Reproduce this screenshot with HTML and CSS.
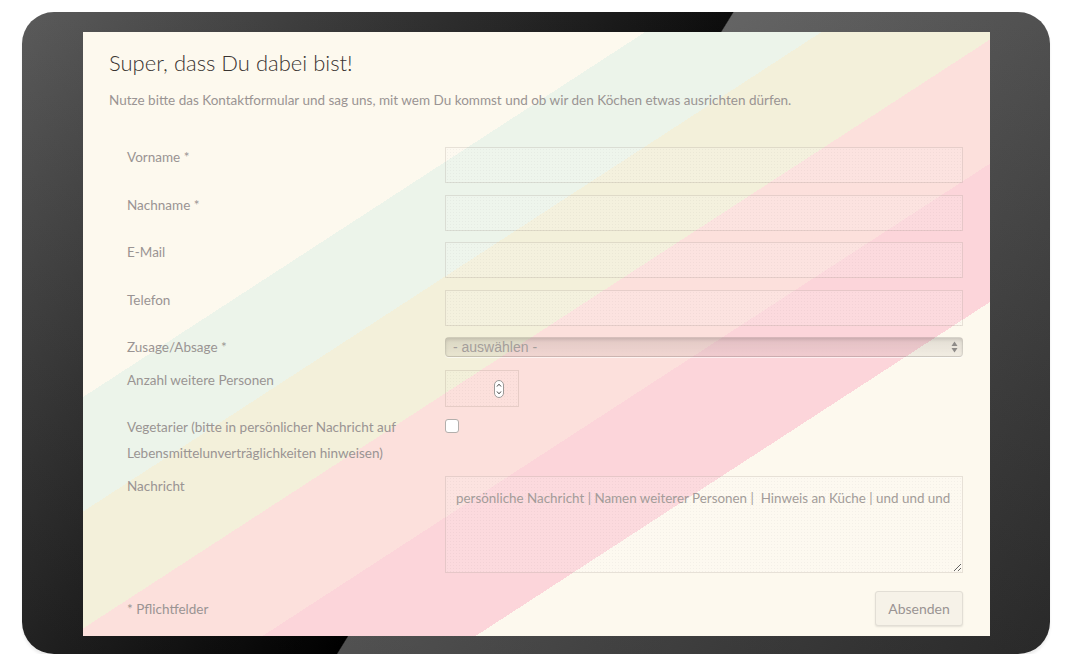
FILE: index.html
```html
<!DOCTYPE html>
<html>

<head>
  <title>Anmeldung</title>
  <link rel="stylesheet" href="styles.css">
</head>

<body>
  <div class="tablet">
    <div class="screen">
      <h1 class="title">Super, dass Du dabei bist!</h1>
      <p class="intro">Nutze bitte das Kontaktformular und sag uns, mit wem Du kommst und ob wir den Köchen etwas ausrichten dürfen.</p>

      <form class="contact-form">
        <div class="row">
          <label>Vorname *</label>
          <input class="field" type="text">
        </div>
        <div class="row">
          <label>Nachname *</label>
          <input class="field" type="text">
        </div>
        <div class="row">
          <label>E-Mail</label>
          <input class="field" type="text">
        </div>
        <div class="row">
          <label>Telefon</label>
          <input class="field" type="text">
        </div>
        <div class="row row-select">
          <label>Zusage/Absage *</label>
          <div class="select-box">
            <select class="select">
              <option>- auswählen -</option>
            </select>
            <svg class="select-arrows" width="7" height="12" viewBox="0 0 7 12">
              <path d="M3.5 0.5 L6.5 5 L0.5 5 Z" fill="#8e8b88" />
              <path d="M3.5 11.5 L6.5 7 L0.5 7 Z" fill="#8e8b88" />
            </svg>
          </div>
        </div>
        <div class="row row-number">
          <label>Anzahl weitere Personen</label>
          <div class="number-box">
            <svg class="spinner" width="10" height="18" viewBox="0 0 10 18">
              <rect x="0.5" y="0.5" width="9" height="17" rx="4.5" fill="#fff" stroke="#9c9a98" />
              <path d="M3 6.5 L5 4.2 L7 6.5" fill="none" stroke="#444" stroke-width="1" />
              <path d="M3 11.5 L5 13.8 L7 11.5" fill="none" stroke="#444" stroke-width="1" />
            </svg>
          </div>
        </div>
        <div class="row row-check">
          <label>Vegetarier (bitte in persönlicher Nachricht auf Lebensmittelunverträglichkeiten hinweisen)</label>
          <input class="check" type="checkbox">
        </div>
        <div class="row">
          <label>Nachricht</label>
          <textarea class="field message" placeholder="persönliche Nachricht | Namen weiterer Personen |  Hinweis an Küche | und und und"></textarea>
        </div>
        <div class="form-footer">
          <span>* Pflichtfelder</span>
          <button class="send" type="button">Absenden</button>
        </div>
      </form>
    </div>
  </div>
</body>

</html>
```

FILE: styles.css
```css
html {
  background-color: #fff;
}

body {
  margin: 0;
  font: 13.5px/26px "Lato", sans-serif;
  color: #9a9493;
}

.tablet {
  width: 1028px;
  height: 642px;
  margin: 12px 0 0 22px;
  padding: 20px 60px 18px 61px;
  box-sizing: border-box;
  border-radius: 32px;
  background:
    linear-gradient(to bottom, rgba(255, 255, 255, .05), rgba(0, 0, 0, .12)),
    linear-gradient(121.7deg, #525252 0%, #3b3b3b 15%, #1c1c1c 34%, #000 49.9%, #5c5c5c 50%, #4b4b4b 68%, #2e2e2e 100%);
  box-shadow: 0 3px 3px rgba(0, 0, 0, .08);
}

.screen {
  height: 604px;
  box-sizing: border-box;
  padding: 18px 27px 0 26px;
  background: linear-gradient(147deg,
      #fdf9ee 0%, #fdf9ee 30.6%,
      #ecf4ea 30.6%, #ecf4ea 40.2%,
      #f3f0da 40.2%, #f3f0da 50%,
      #fce0dc 50%, #fce0dc 60.4%,
      #fcd5da 60.4%, #fcd5da 72%,
      #fdf9ee 72%);
}

.title {
  margin: 0;
  font: 300 22px/25px "Lato", sans-serif;
  color: #3a3431;
}

.intro {
  margin: 15px 0 37px;
  line-height: 20px;
}

.contact-form {
  padding-left: 18px;
}

.row {
  display: grid;
  grid-template-columns: 318px 1fr;
  align-items: start;
  margin-bottom: 11.5px;
}

.row label {
  margin-top: -3px;
  padding-right: 20px;
}

.field {
  display: block;
  box-sizing: border-box;
  width: 100%;
  height: 36px;
  margin: 0;
  padding: 0 10px;
  border: 1px solid rgba(120, 100, 90, .16);
  border-radius: 0;
  outline: none;
  background:
    radial-gradient(rgba(0, 0, 0, .035) 30%, transparent 40%) 0 0 / 3px 3px,
    rgba(255, 255, 255, .12);
  font: 13.4px/20px "Lato", sans-serif;
  color: #9a9493;
}

.field::placeholder {
  color: #a39c99;
}

.row-select {
  margin-bottom: 10px;
}

.select-box {
  display: flex;
  align-items: center;
  height: 20px;
  box-sizing: border-box;
  border: 1px solid rgba(0, 0, 0, .1);
  border-radius: 4px;
  background: linear-gradient(to bottom, rgba(90, 80, 75, .16), rgba(90, 80, 75, .07));
  box-shadow: inset 0 2px 3px rgba(0, 0, 0, .1), 0 1px 0 rgba(255, 255, 255, .6);
}

.select {
  flex: 1;
  appearance: none;
  border: none;
  outline: none;
  background: none;
  padding: 0 0 0 7px;
  font: 14px/18px "Liberation Sans", sans-serif;
  color: #a49e9b;
}

.select-arrows {
  margin-right: 4px;
}

.row-number {
  margin-bottom: 10px;
}

.number-box {
  display: flex;
  align-items: center;
  justify-content: flex-end;
  width: 74px;
  height: 37px;
  box-sizing: border-box;
  padding-right: 14px;
  border: 1px solid rgba(120, 100, 90, .16);
  background: radial-gradient(rgba(0, 0, 0, .035) 30%, transparent 40%) 0 0 / 3px 3px;
}

.row-check {
  margin-bottom: 10px;
}

.check {
  appearance: none;
  width: 14px;
  height: 14px;
  margin: 2px 0 0;
  border: 1px solid #b3afac;
  border-radius: 3px;
  background: #fff;
}

.message {
  height: 97px;
  padding: 11px 4px 11px 10px;
  resize: vertical;
}

.form-footer {
  display: flex;
  justify-content: space-between;
  align-items: center;
  margin-top: 18px;
}

.send {
  width: 88px;
  height: 35px;
  border: 1px solid #e2ded5;
  border-radius: 3px;
  background: #f6f2e8;
  box-shadow: 0 1px 2px rgba(0, 0, 0, .1);
  font: 14px "Lato", sans-serif;
  color: #9a9493;
}
```
